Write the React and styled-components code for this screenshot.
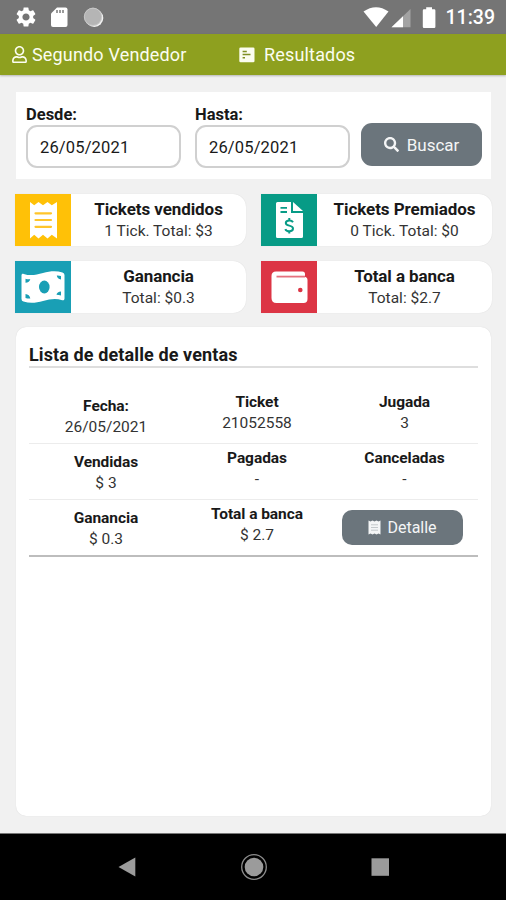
import React from "react";
import styled, { createGlobalStyle } from "styled-components";
import { FaRegUser, FaSearch } from "react-icons/fa";
import { MdSettings } from "react-icons/md";

const GlobalStyle = createGlobalStyle`
  * {
    box-sizing: border-box;
  }
  body {
    margin: 0;
    background-color: #f1f1f1;
    font-family: Roboto, sans-serif;
    color: #191919;
  }
`;

const Screen = styled.div`
  display: flex;
  flex-direction: column;
  width: 506px;
  height: 900px;
  overflow: hidden;
`;

const StatusBar = styled.div`
  display: flex;
  justify-content: space-between;
  height: 34px;
  padding: 0 11px 0 14px;
  background-color: #757575;
  color: #fff;
`;

const StatusGroup = styled.div`
  display: flex;
  align-items: center;
  gap: ${(props) => props.$gap}px;

  svg {
    flex: none;
    display: block;
  }
`;

const Clock = styled.span`
  margin-left: 3px;
  font-size: 19.5px;
  font-weight: 500;
  line-height: 34px;
  padding-top: 2px;
`;

const Toolbar = styled.header`
  display: grid;
  grid-template-columns: 228px 1fr;
  height: 41px;
  padding-left: 11px;
  background-color: #8ea01f;
  box-shadow: 0 1px 2px rgba(0, 0, 0, 0.25);
  color: #fbfdf0;
`;

const ToolbarItem = styled.div`
  display: flex;
  align-items: center;
  gap: ${(props) => props.$gap}px;
  font-size: 18px;
  letter-spacing: 0.17px;
  white-space: nowrap;
`;

const Content = styled.main`
  flex: 1;
  display: flex;
  flex-direction: column;
  padding: 17px 15px 16px;
`;

const Filters = styled.section`
  display: flex;
  height: 87px;
  margin-left: 1px;
  padding: 12px 9px 0 10px;
  background-color: #fff;
`;

const Field = styled.label`
  display: flex;
  flex-direction: column;
  width: 155px;
  margin-right: ${(props) => props.$gap}px;
  font-size: 16.5px;
  font-weight: 700;
  line-height: 21px;
`;

const DateBox = styled.div`
  height: 43px;
  padding: 2px 0 0 12px;
  border: 2px solid #d0d0d0;
  border-radius: 11px;
  font-size: 16.5px;
  font-weight: 400;
  line-height: 37px;
  letter-spacing: 0.15px;
`;

const Button = styled.button`
  display: flex;
  align-items: center;
  justify-content: center;
  gap: ${(props) => props.$gap}px;
  width: 121px;
  height: ${(props) => props.$height}px;
  margin: ${(props) => props.$top}px 0 0;
  padding: 0;
  border: 0;
  border-radius: ${(props) => props.$radius}px;
  background-color: #6b757c;
  color: #f4f5f6;
  font-family: inherit;
  font-size: ${(props) => props.$size}px;
`;

const Stats = styled.section`
  display: grid;
  grid-template-columns: 231px 231px;
  grid-auto-rows: 52px;
  gap: 15px;
  margin-top: 15px;
`;

const StatCard = styled.article`
  display: flex;
  background-color: #fff;
  border-radius: 0 13px 13px 0;
  box-shadow: 0 0 1px rgba(0, 0, 0, 0.15);
`;

const StatIcon = styled.div`
  width: 56px;
  height: 52px;
  background-color: ${(props) => props.$color};
`;

const StatText = styled.div`
  flex: 1;
  padding-top: 4px;
  text-align: center;
  white-space: nowrap;
`;

const StatTitle = styled.div`
  font-size: 17px;
  font-weight: 700;
  line-height: 22px;
  letter-spacing: -0.08px;
`;

const StatValue = styled.div`
  font-size: 15.5px;
  line-height: 22px;
  color: #333;
`;

const ListCard = styled.section`
  height: 489px;
  margin: 14px 0 0 1px;
  padding: 17px 13px 0;
  background-color: #fff;
  border-radius: 10px;
  box-shadow: 0 0 1px rgba(0, 0, 0, 0.15);
`;

const ListTitle = styled.h2`
  height: 24px;
  margin: 0;
  border-bottom: 2px solid #dedede;
  font-size: 18px;
  font-weight: 700;
  line-height: 21px;
  letter-spacing: 0.11px;
`;

const Table = styled.div`
  margin-top: 20px;
  border-bottom: 2px solid #bdbdbd;
`;

const Row = styled.div`
  display: grid;
  grid-template-columns: 154px 148px 147px;
  height: ${(props) => (props.$last ? 55 : 56)}px;
  border-bottom: ${(props) => (props.$last ? "0" : "1px solid #ececec")};
`;

const Cell = styled.div`
  padding-top: ${(props) => (props.$first ? 8 : 4)}px;
  text-align: center;
  white-space: nowrap;
`;

const CellLabel = styled.div`
  font-size: 15.5px;
  font-weight: 700;
  line-height: 20px;
  letter-spacing: -0.06px;
`;

const CellValue = styled.div`
  font-size: 15.5px;
  line-height: 22px;
  color: #333;
`;

const ButtonCell = styled.div`
  display: flex;
  justify-content: center;
  padding-right: 4px;
`;

const NavBar = styled.footer`
  display: flex;
  align-items: center;
  justify-content: space-between;
  height: 67px;
  padding: 0 115px 1px 116px;
  border-top: 1px solid #777;
  background-color: #000;
`;

const SdCard = () => (
  <svg width="18" height="21" viewBox="0 0 18 21">
    <path d="M7 0.5H15.5Q17.5 0.5 17.5 2.5V18Q17.5 20 15.5 20H3Q1 20 1 18V6.5Z" fill="#fff" />
    <path d="M7 3V6M10 3V6M13 3V6" stroke="#8a8a8a" strokeWidth="1.7" />
  </svg>
);

const SyncDot = () => (
  <svg width="26" height="22" viewBox="-2 0 26 22">
    <circle cx="12.3" cy="12" r="9" fill="#f2f2f2" />
    <circle cx="11" cy="10.8" r="9" fill="#b5b5b5" />
    <circle cx="11" cy="10.8" r="8.7" fill="none" stroke="#cfcfcf" strokeWidth="0.8" />
  </svg>
);

const Signals = () => (
  <svg width="73" height="24" viewBox="0 0 73 24">
    <path d="M0.5 6.5Q13 -2 25.5 6.5L13.2 22Z" fill="#fff" />
    <path d="M28.5 22.3L47.5 4V22.3Z" fill="#a3a3a3" />
    <path d="M28.5 22.3L40 11.2V22.3Z" fill="#fff" />
    <path d="M63.2 2.2H69V4.2H71.2Q72.4 4.2 72.4 5.4V21.8Q72.4 23 71.2 23H61Q59.8 23 59.8 21.8V5.4Q59.8 4.2 61 4.2H63.2Z" fill="#fff" />
  </svg>
);

const PollIcon = () => (
  <svg width="16" height="16" viewBox="0 0 16 16">
    <rect x="0.3" y="0.5" width="15.2" height="14.8" rx="1.3" fill="#fbfdf0" />
    <path d="M3.6 4.6H7.8M3.6 7.6H11.5M3.6 10.8H6" stroke="#7f8f24" strokeWidth="1.5" />
  </svg>
);

const ReceiptIcon = () => (
  <svg width="56" height="52" viewBox="0 0 56 52">
    <path
      d="M15 8L19.2 11.3L23.5 8L28 11.3L32.5 8L36.8 11.3L42 8V44.5L36.8 40.8L32.5 44.5L28 40.8L23.5 44.5L19.2 40.8L15 44.5Z"
      fill="#fff"
    />
    <path d="M20.5 19.3H36M20.5 26H36M20.5 32.8H36" stroke="#ffc52b" strokeWidth="2.2" strokeLinecap="round" />
  </svg>
);

const InvoiceIcon = () => (
  <svg width="56" height="52" viewBox="0 0 56 52">
    <path d="M15 9.5Q15 8 16.5 8H30V19H42V42.5Q42 44 40.5 44H16.5Q15 44 15 42.5Z" fill="#fff" />
    <path d="M32 8L42 17H32Z" fill="#fff" />
    <path d="M19.5 13.8H26M19.5 18H26" stroke="#079b86" strokeWidth="1.8" />
    <path
      d="M32 28.2C31.2 26.8 30 26.4 28.3 26.4C26.1 26.4 24.8 27.3 24.8 29C24.8 32.6 32 30.6 32 34.5C32 36.4 30.5 37.3 28.3 37.3C26.3 37.3 24.9 36.6 24.3 35.1M28.3 24V26.4M28.3 37.3V39.5"
      fill="none"
      stroke="#079b86"
      strokeWidth="2"
    />
  </svg>
);

const MoneyIcon = () => (
  <svg width="56" height="52" viewBox="0 0 56 52">
    <path
      d="M6.5 14.3C6.5 12.8 7.5 12.4 8.8 12.9C15 15 21 14 28 12C35 10 41 9.5 47.5 11.4Q49.5 12 49.5 14V37.5C49.5 39 48.5 39.7 47.2 39.2C41 37 35 38 28 40C21 42 15 42.5 8.5 40.6Q6.5 40 6.5 38Z"
      fill="#fff"
    />
    <ellipse cx="29.3" cy="26" rx="5.3" ry="6.5" fill="#199fb5" />
    <path
      d="M10.5 17.8C12.6 18.5 14.2 18.4 15.3 18.1C15 20.4 13 21.8 10.5 21.8ZM10.5 33C13 33.1 15 35 15.3 37.5C13.6 37.6 12 37.5 10.5 37ZM46 15V18.5C43.7 18.2 42 16.7 41.8 14.5C43.3 14.4 44.7 14.6 46 15ZM46 30.5V34.4C44.5 34 43 33.7 41.5 33.7C41.7 31.8 43.6 30.5 46 30.5Z"
      fill="#199fb5"
    />
  </svg>
);

const WalletIcon = () => (
  <svg width="56" height="52" viewBox="0 0 56 52">
    <path
      d="M15 10.5H41.5Q44 10.5 44 13V15.5H42Q46.5 15.5 46.5 19V38Q46.5 42 42.5 42H15.5Q10.5 42 10.5 37V15Q10.5 10.5 15 10.5Z"
      fill="#fff"
    />
    <path d="M15.5 15.6H44" stroke="#e5727f" strokeWidth="1.8" />
    <circle cx="39.3" cy="29" r="2.3" fill="#dc3545" />
  </svg>
);

const SmallReceipt = () => (
  <svg width="13" height="15" viewBox="0 0 13 15">
    <path d="M0.5 0.5L2.5 1.5L4.5 0.5L6.5 1.5L8.5 0.5L10.5 1.5L12.5 0.5V14.5L10.5 13.5L8.5 14.5L6.5 13.5L4.5 14.5L2.5 13.5L0.5 14.5Z" fill="#f4f5f6" />
    <path d="M3 4.8H10M3 7.5H10M3 10.2H10" stroke="#c3c8cb" />
  </svg>
);

const stats = [
  { title: "Tickets vendidos", value: "1 Tick. Total: $3", color: "#ffc107", icon: <ReceiptIcon /> },
  { title: "Tickets Premiados", value: "0 Tick. Total: $0", color: "#079b86", icon: <InvoiceIcon /> },
  { title: "Ganancia", value: "Total: $0.3", color: "#199fb5", icon: <MoneyIcon /> },
  { title: "Total a banca", value: "Total: $2.7", color: "#dc3545", icon: <WalletIcon /> },
];

const rows = [
  [
    { label: "Fecha:", value: "26/05/2021" },
    { label: "Ticket", value: "21052558" },
    { label: "Jugada", value: "3" },
  ],
  [
    { label: "Vendidas", value: "$ 3" },
    { label: "Pagadas", value: "-" },
    { label: "Canceladas", value: "-" },
  ],
  [
    { label: "Ganancia", value: "$ 0.3" },
    { label: "Total a banca", value: "$ 2.7" },
  ],
];

const App = () => {
  return (
    <Screen>
      <GlobalStyle />
      <StatusBar>
        <StatusGroup $gap={12}>
          <MdSettings size={24} />
          <SdCard />
          <SyncDot />
        </StatusGroup>
        <StatusGroup $gap={7}>
          <Signals />
          <Clock>11:39</Clock>
        </StatusGroup>
      </StatusBar>
      <Toolbar>
        <ToolbarItem $gap={4}>
          <FaRegUser size={17} />
          Segundo Vendedor
        </ToolbarItem>
        <ToolbarItem $gap={9}>
          <PollIcon />
          Resultados
        </ToolbarItem>
      </Toolbar>
      <Content>
        <Filters>
          <Field $gap={14}>
            Desde:
            <DateBox>26/05/2021</DateBox>
          </Field>
          <Field $gap={11}>
            Hasta:
            <DateBox>26/05/2021</DateBox>
          </Field>
          <Button $gap={8} $height={43} $top={19} $radius={11} $size={17}>
            <FaSearch size={15} />
            Buscar
          </Button>
        </Filters>
        <Stats>
          {stats.map((stat) => (
            <StatCard key={stat.title}>
              <StatIcon $color={stat.color}>{stat.icon}</StatIcon>
              <StatText>
                <StatTitle>{stat.title}</StatTitle>
                <StatValue>{stat.value}</StatValue>
              </StatText>
            </StatCard>
          ))}
        </Stats>
        <ListCard>
          <ListTitle>Lista de detalle de ventas</ListTitle>
          <Table>
            {rows.map((cells, i) => (
              <Row key={i} $last={i === rows.length - 1}>
                {cells.map((cell, j) => (
                  <Cell key={cell.label} $first={j === 0}>
                    <CellLabel>{cell.label}</CellLabel>
                    <CellValue>{cell.value}</CellValue>
                  </Cell>
                ))}
                {i === rows.length - 1 && (
                  <ButtonCell>
                    <Button $gap={6} $height={35} $top={10} $radius={10} $size={16}>
                      <SmallReceipt />
                      Detalle
                    </Button>
                  </ButtonCell>
                )}
              </Row>
            ))}
          </Table>
        </ListCard>
      </Content>
      <NavBar>
        <svg width="20" height="20" viewBox="0 0 20 20">
          <path d="M2.5 10L19.3 0.5V19.5Z" fill="#9b9b9b" />
        </svg>
        <svg width="28" height="28" viewBox="0 0 28 28">
          <circle cx="14" cy="14" r="12.3" fill="none" stroke="#8c8c8c" strokeWidth="1.3" />
          <circle cx="14" cy="14" r="9.3" fill="#9b9b9b" />
        </svg>
        <svg width="20" height="20" viewBox="0 0 20 20">
          <rect x="0.5" y="1.3" width="17.5" height="17.5" fill="#9b9b9b" />
        </svg>
      </NavBar>
    </Screen>
  );
};

export default App;
